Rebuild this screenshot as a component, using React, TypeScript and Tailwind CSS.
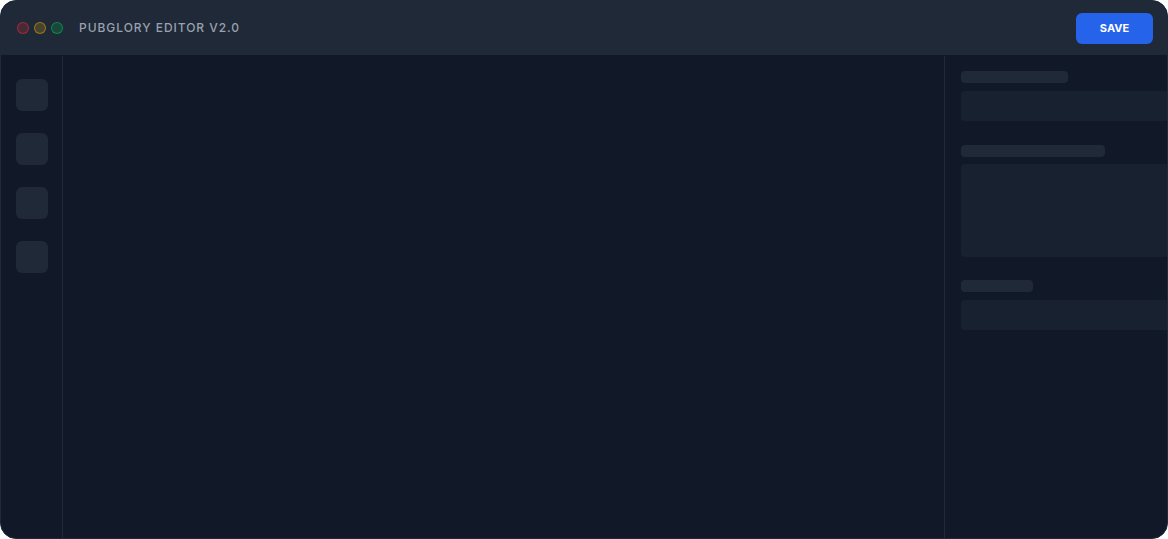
import React from "react";

export default function App() {
  return (
    <div className="w-[1168px] h-[539px] bg-white" style={{ fontFamily: "Inter, 'Noto Sans', sans-serif" }}>
      <div className="w-full h-full rounded-2xl overflow-hidden border border-gray-800 bg-[#111827] flex flex-col">
        <header className="h-[55px] flex-none bg-[#1f2937] border-b border-[#111827] flex items-center pl-4 pr-[14px]">
          <div className="flex items-center gap-[5px]">
            <span className="w-3 h-3 rounded-full bg-red-500/20 border border-red-500/50" />
            <span className="w-3 h-3 rounded-full bg-yellow-500/20 border border-yellow-500/50" />
            <span className="w-3 h-3 rounded-full bg-green-500/20 border border-green-500/50" />
          </div>
          <div className="ml-4 text-[12px] tracking-[0.08em] text-gray-400 font-medium">PUBGLORY EDITOR V2.0</div>
          <div className="flex-1" />
          <button className="w-[77px] h-[31px] rounded-md bg-[#2563eb] text-white text-[11px] font-bold">SAVE</button>
        </header>
        <div className="flex-1 flex min-h-0">
          <aside className="w-[62px] flex-none border-r border-gray-800 flex flex-col items-start pl-[15px] pt-[23px] gap-[22px]">
            <div className="w-8 h-8 rounded-md bg-[#1f2937]" />
            <div className="w-8 h-8 rounded-md bg-[#1f2937]" />
            <div className="w-8 h-8 rounded-md bg-[#1f2937]" />
            <div className="w-8 h-8 rounded-md bg-[#1f2937]" />
          </aside>
          <main className="w-[881px] flex-none" />
          <aside className="w-80 flex-none border-l border-gray-800 px-4 pt-[15px] flex flex-col">
            <div className="w-[107px] h-3 rounded bg-[#1f2937]" />
            <div className="mt-2 h-[30px] rounded bg-[#1f2937]/50" />
            <div className="mt-6 w-[144px] h-3 rounded bg-[#1f2937]" />
            <div className="mt-[7px] h-[93px] rounded bg-[#1f2937]/50" />
            <div className="mt-[23px] w-[72px] h-3 rounded bg-[#1f2937]" />
            <div className="mt-2 h-[30px] rounded bg-[#1f2937]/50" />
          </aside>
        </div>
      </div>
    </div>
  );
}
